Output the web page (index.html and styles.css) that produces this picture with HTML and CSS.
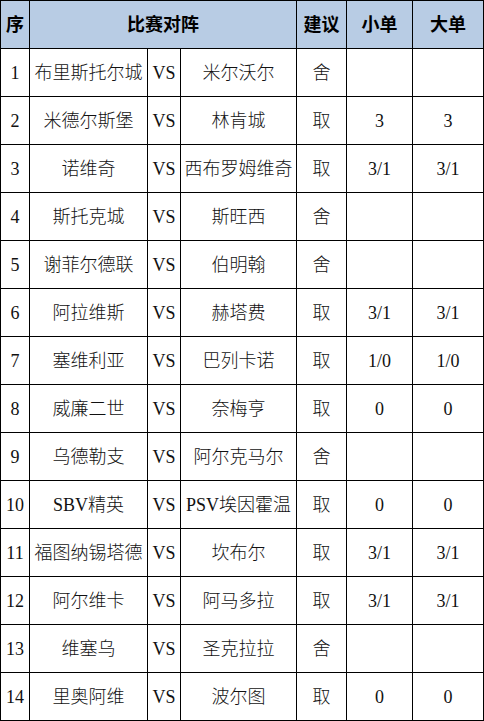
FILE: index.html
```html
<!DOCTYPE html>
<html lang="zh-CN">
<head>
<meta charset="utf-8">
<title>比赛对阵</title>
<link rel="stylesheet" href="styles.css">
</head>
<body>
<table class="grid">
  <colgroup>
    <col class="c-no"><col class="c-home"><col class="c-vs"><col class="c-away"><col class="c-tip"><col class="c-small"><col class="c-big">
  </colgroup>
  <thead>
    <tr class="head">
      <th>序</th><th colspan="3">比赛对阵</th><th>建议</th><th>小单</th><th>大单</th>
    </tr>
  </thead>
  <tbody>
    <tr><td>1</td><td>布里斯托尔城</td><td>VS</td><td>米尔沃尔</td><td>舍</td><td></td><td></td></tr>
    <tr><td>2</td><td>米德尔斯堡</td><td>VS</td><td>林肯城</td><td>取</td><td>3</td><td>3</td></tr>
    <tr><td>3</td><td>诺维奇</td><td>VS</td><td>西布罗姆维奇</td><td>取</td><td>3/1</td><td>3/1</td></tr>
    <tr><td>4</td><td>斯托克城</td><td>VS</td><td>斯旺西</td><td>舍</td><td></td><td></td></tr>
    <tr><td>5</td><td>谢菲尔德联</td><td>VS</td><td>伯明翰</td><td>舍</td><td></td><td></td></tr>
    <tr><td>6</td><td>阿拉维斯</td><td>VS</td><td>赫塔费</td><td>取</td><td>3/1</td><td>3/1</td></tr>
    <tr><td>7</td><td>塞维利亚</td><td>VS</td><td>巴列卡诺</td><td>取</td><td>1/0</td><td>1/0</td></tr>
    <tr><td>8</td><td>威廉二世</td><td>VS</td><td>奈梅亨</td><td>取</td><td>0</td><td>0</td></tr>
    <tr><td>9</td><td>乌德勒支</td><td>VS</td><td>阿尔克马尔</td><td>舍</td><td></td><td></td></tr>
    <tr><td>10</td><td>SBV精英</td><td>VS</td><td>PSV埃因霍温</td><td>取</td><td>0</td><td>0</td></tr>
    <tr><td>11</td><td>福图纳锡塔德</td><td>VS</td><td>坎布尔</td><td>取</td><td>3/1</td><td>3/1</td></tr>
    <tr><td>12</td><td>阿尔维卡</td><td>VS</td><td>阿马多拉</td><td>取</td><td>3/1</td><td>3/1</td></tr>
    <tr><td>13</td><td>维塞乌</td><td>VS</td><td>圣克拉拉</td><td>舍</td><td></td><td></td></tr>
    <tr><td>14</td><td>里奥阿维</td><td>VS</td><td>波尔图</td><td>取</td><td>0</td><td>0</td></tr>
  </tbody>
</table>
</body>
</html>
```

FILE: styles.css
```css
html, body {
  margin: 0;
  padding: 0;
  background: #ffffff;
}

.grid {
  width: 484px;
  table-layout: fixed;
  border-collapse: separate;
  border-spacing: 1px;
  background: #000000;
  font-family: "Liberation Serif", "Noto Sans CJK SC", serif;
  font-size: 18px;
  color: #111111;
}

.c-no { width: 28px; }
.c-home { width: 117px; }
.c-vs { width: 32px; }
.c-away { width: 115px; }
.c-tip { width: 49px; }
.c-small { width: 65px; }
.c-big { width: 70px; }

.grid th,
.grid td {
  height: 47px;
  padding: 0;
  text-align: center;
  vertical-align: middle;
  white-space: nowrap;
  overflow: hidden;
  background: #ffffff;
  line-height: 20px;
}

.grid td {
  font-weight: 300;
}

.grid th {
  background: #b8cce4;
  font-weight: 700;
  font-size: 18px;
  color: #000000;
}
```
